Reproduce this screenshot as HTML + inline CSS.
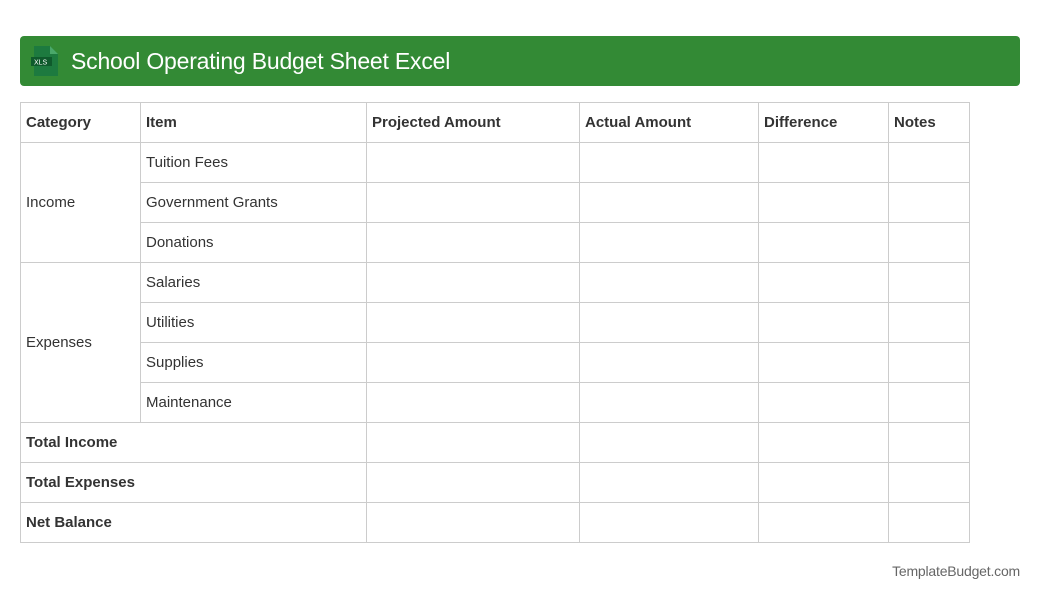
<!DOCTYPE html>
<html><head><style>
body{margin:0;background:#fff;font-family:"Liberation Sans",Arial,sans-serif;}
.hdr{position:absolute;left:20px;top:36px;width:1000px;height:50px;background:#338a35;border-radius:4px;}
.hdr .t{position:absolute;left:51px;top:12px;color:#fff;font-size:23px;letter-spacing:-0.2px;}
table{position:absolute;left:20px;top:102px;border-collapse:collapse;table-layout:fixed;}
td{border:1px solid #ccc;height:39px;padding:0 0 0 5px;font-size:15px;color:#333;}
.b{font-weight:bold;}
.foot{position:absolute;right:20px;top:563px;font-size:14px;color:#666;letter-spacing:-0.2px;}
</style></head><body>
<div class="hdr">
<svg style="position:absolute;left:11px;top:10px" width="30" height="30" viewBox="0 0 30 30">
<path d="M3 0H19L27 8V30H3Z" fill="#1d7a3f"/><path d="M19 0V8H27Z" fill="#4aa86a"/>
<rect x="0" y="11" width="21" height="9" fill="#0f5a2c"/>
<text x="3" y="18.5" font-size="7" fill="#fff" font-family="Liberation Sans">XLS</text>
</svg>
<div class="t">School Operating Budget Sheet Excel</div></div>
<table>
<colgroup><col style="width:120px"><col style="width:226px"><col style="width:213px"><col style="width:179px"><col style="width:130px"><col style="width:81px"></colgroup>
<tr><td class="b">Category</td><td class="b">Item</td><td class="b">Projected Amount</td><td class="b">Actual Amount</td><td class="b">Difference</td><td class="b">Notes</td></tr>
<tr><td rowspan="3">Income</td><td>Tuition Fees</td><td></td><td></td><td></td><td></td></tr>
<tr><td>Government Grants</td><td></td><td></td><td></td><td></td></tr>
<tr><td>Donations</td><td></td><td></td><td></td><td></td></tr>
<tr><td rowspan="4">Expenses</td><td>Salaries</td><td></td><td></td><td></td><td></td></tr>
<tr><td>Utilities</td><td></td><td></td><td></td><td></td></tr>
<tr><td>Supplies</td><td></td><td></td><td></td><td></td></tr>
<tr><td>Maintenance</td><td></td><td></td><td></td><td></td></tr>
<tr><td colspan="2" class="b">Total Income</td><td></td><td></td><td></td><td></td></tr>
<tr><td colspan="2" class="b">Total Expenses</td><td></td><td></td><td></td><td></td></tr>
<tr><td colspan="2" class="b">Net Balance</td><td></td><td></td><td></td><td></td></tr>
</table>
<div class="foot">TemplateBudget.com</div>
</body></html>
